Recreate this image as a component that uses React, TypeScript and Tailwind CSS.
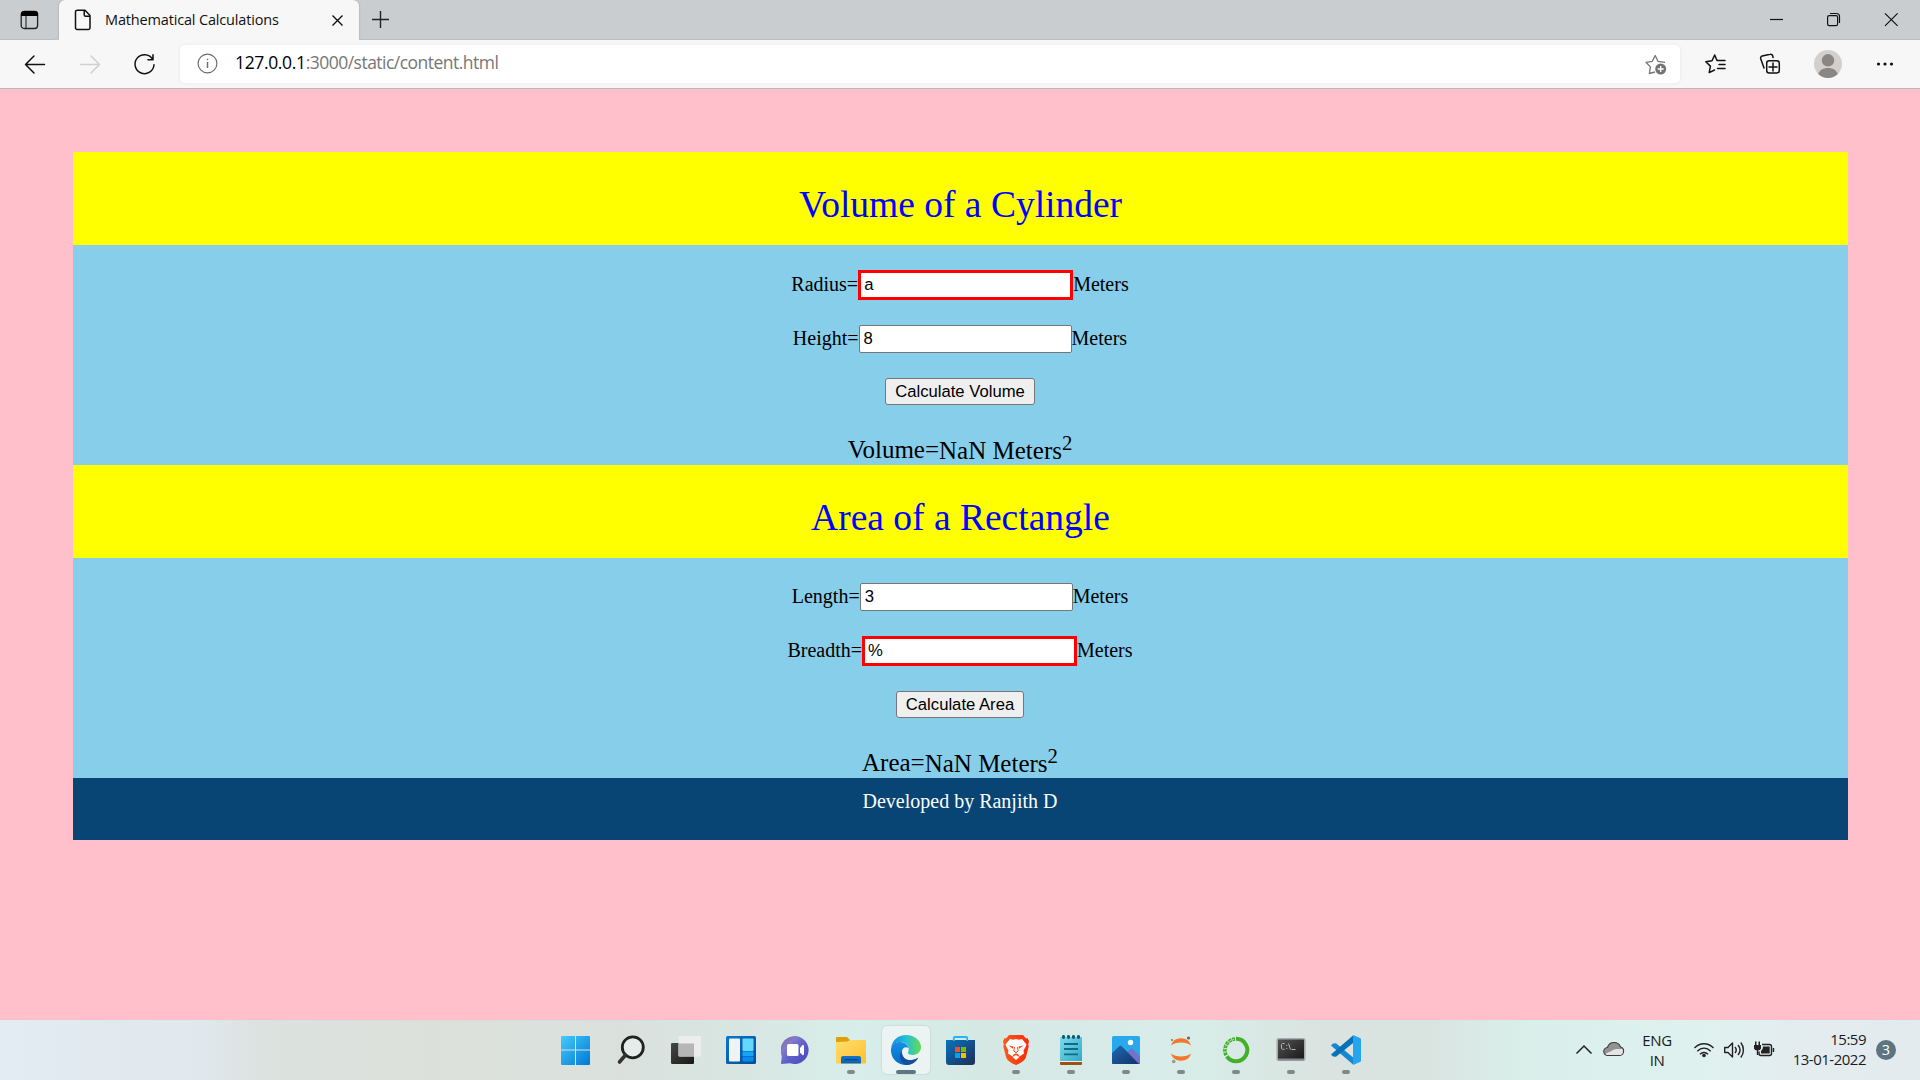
import React from 'react';

type P = { children?: React.ReactNode };

function Field({ label, value, invalid, top }: { label: string; value: string; invalid?: boolean; top: string }) {
  return (
    <div className={`flex items-center justify-center text-[20px] leading-[22px] ${top}`}>
      <span className="pb-[2px]">{label}</span>
      <input
        readOnly
        value={value}
        className={
          invalid
            ? 'h-[30px] w-[215px] border-[3px] border-[#ff0000] bg-white px-[3px] font-["Liberation_Sans",Arial,sans-serif] text-[16.667px] outline-none'
            : 'h-[28px] w-[213px] rounded-[2px] border border-[#767676] bg-white px-[4px] font-["Liberation_Sans",Arial,sans-serif] text-[16.667px] outline-none'
        }
      />
      <span className="pb-[2px]">Meters</span>
    </div>
  );
}

function CalcButton({ children, cls }: P & { cls: string }) {
  return (
    <button className={`block h-[27px] rounded-[3px] border border-[#767676] bg-[#efefef] text-center font-["Liberation_Sans",Arial,sans-serif] text-[16.667px] leading-[25px] whitespace-nowrap ${cls}`}>
      {children}
    </button>
  );
}

function Result({ label }: { label: string }) {
  return (
    <div className="mt-[27px] flex h-[33px] items-start justify-center text-[25px] leading-[28px]">
      <span className="pt-[4px]">{label}=</span>
      <span className="pt-[5px]">NaN Meters</span>
      <span className="text-[20.8px] leading-[22px]">2</span>
    </div>
  );
}

function Heading({ children }: P) {
  return <h1 className="h-[93px] bg-[#ffff00] pt-[32px] text-center text-[37.5px] leading-[42px] text-[#0000ff]">{children}</h1>;
}

function Slot({ children, state }: P & { state?: 'open' | 'active' }) {
  return (
    <div className="flex h-[60px] w-[55px] flex-col items-center pt-[6px]">
      <div className={`flex h-[48px] w-[48px] flex-col items-center rounded-[5px] ${state === 'active' ? 'bg-[#ecf4f3] shadow-[0_0_1px_1px_rgba(0,0,0,0.06)]' : ''}`}>
        <svg className="mt-[9px] block shrink-0" width="30" height="30" viewBox="0 0 30 30">{children}</svg>
        {state === 'open' && <div className="mt-[5px] h-[4px] w-[8px] rounded-full bg-[#7f8a88]" />}
        {state === 'active' && <div className="mt-[5px] h-[4px] w-[20px] rounded-full bg-[#5f7583]" />}
      </div>
    </div>
  );
}

function TabStrip() {
  return (
    <div className="flex h-[40px] items-end bg-[#cacdcf]">
      <div className="flex h-[40px] w-[59px] items-center rounded-br-[6px] border-b border-[#babdbe] pl-[20px]">
        <svg width="19" height="20" viewBox="0 0 19 20">
          <rect x="1.2" y="1.5" width="16.4" height="17" rx="3" fill="none" stroke="#222" strokeWidth="1.3" />
          <path d="M1 5V4a3 3 0 0 1 3-3h11a3 3 0 0 1 3 3v2H1z" fill="#000" />
          <path d="M6 6v12" stroke="#333" strokeWidth="1.2" />
        </svg>
      </div>
      <div className="flex h-[40px] w-[300px] items-center rounded-t-[6px] bg-[#f7f7f7] pl-[15px] shadow-[0_0_2px_rgba(0,0,0,0.25)]">
        <svg width="18" height="22" viewBox="0 0 18 22" fill="none" stroke="#111" strokeWidth="1.5" strokeLinejoin="round">
          <path d="M3.500 1.200H11L16 6.500V18.800a1.800 1.800 0 0 1-1.800 1.800H3.300a1.800 1.800 0 0 1-1.800-1.800V3a1.800 1.800 0 0 1 2-1.800z" />
          <path d="M10.200 1.500v4.200a1.500 1.500 0 0 0 1.500 1.500H16" />
        </svg>
        <span className="ml-[13px] w-[212px] whitespace-nowrap pb-px font-['Open_Sans','Noto_Sans',sans-serif] text-[14.500px] tracking-[-0.16px] text-[#111]">Mathematical Calculations</span>
        <svg className="ml-[14px] mt-px" width="13" height="13" viewBox="0 0 13 13" stroke="#111" strokeWidth="1.400"><path d="M1.500 1.500l10 10M11.500 1.500l-10 10" /></svg>
      </div>
      <div className="flex h-[40px] flex-1 items-center border-b border-[#babdbe]">
        <svg className="ml-[12px]" width="19" height="19" viewBox="0 0 19 19" stroke="#222" strokeWidth="1.400"><path d="M9.500 1v17M1 9.500h17" /></svg>
        <svg className="ml-auto" width="150" height="39" viewBox="1770 0 150 39" fill="none" stroke="#111" strokeWidth="1.200">
          <path d="M1770 19.500h13" />
          <rect x="1827.600" y="15.600" width="10" height="10" rx="1.600" />
          <path d="M1830 13.500h6.500a3 3 0 0 1 3 3V23" />
          <path d="M1885 13.300l12.600 12.600M1897.600 13.300L1885 25.900" />
        </svg>
      </div>
    </div>
  );
}

function Toolbar() {
  return (
    <div className="flex h-[49px] items-center border-b border-[#b5b9ba] bg-[#f7f7f7]">
      <svg className="shrink-0" width="180" height="48" viewBox="0 41 180 48" fill="none" stroke="#111" strokeWidth="1.500" strokeLinecap="round" strokeLinejoin="round">
        <path d="M44.500 65.500H25.500M34 57L25.500 65.500l8.500 8.500" />
        <path d="M80.500 65.500H99M91 57l8.500 8.500L91 74" stroke="#d0d0d0" />
        <path d="M152.500 60a9.500 9.500 0 1 0 1.500 5.800M153 55.800v5h-5" />
      </svg>
      <div className="mb-[2px] mt-px flex h-[38px] w-[1500px] items-center rounded-[5px] bg-white pl-[17px] shadow-[0_0_4px_rgba(0,0,0,0.07)]">
        <svg width="21" height="21" viewBox="0 0 21 21" fill="none" stroke="#6d6d6d" strokeWidth="1.200">
          <circle cx="10.500" cy="10.500" r="9.400" /><path d="M10.500 9v6" strokeWidth="1.500" /><circle cx="10.500" cy="6.500" r=".800" fill="#6d6d6d" stroke="none" />
        </svg>
        <span className="ml-[17px] whitespace-nowrap pb-[2px] font-['Open_Sans','Noto_Sans',sans-serif] text-[17.500px] tracking-[-0.520px] text-[#767676]"><span className="tracking-[-0.350px] text-black">127.0.0.1</span>:3000/static/content.html</span>
        <svg className="ml-auto mr-[13px]" width="22" height="22" viewBox="0 0 22 22">
          <path d="M10 19l-5.600 1.500 1-6.600L1 9.300l6.300-1L10.200 2.500 13 8.300l7 1" fill="none" stroke="#747474" strokeWidth="1.300" strokeLinejoin="round" />
          <circle cx="15.700" cy="16" r="5.500" fill="#747474" /><path d="M12.700 16h6M15.700 13v6" stroke="#fff" strokeWidth="1.300" />
        </svg>
      </div>
      <svg width="240" height="48" viewBox="1680 40 240 48" fill="none" stroke="#111" strokeWidth="1.500" strokeLinejoin="round" strokeLinecap="round">
        <path d="M1717 60.500l-2.300-5.500-2.700 5.700-6.200 1 4.600 4.400-1.200 6.500 5.300-2.600M1717.500 60.500h7.500M1719 64.500h6M1717.500 68.500h7.500" />
        <rect x="1766.700" y="60.700" width="12.600" height="12.400" rx="2.500" /><path d="M1773 63v8M1769 67h8" />
        <path d="M1764 68l-3.300-9.200a2.200 2.200 0 0 1 1.500-2.800l8-1.700a2 2 0 0 1 2.500 1.700l.400 1.500" />
        <circle cx="1828" cy="64" r="14" fill="#d2d0ce" stroke="none" />
        <circle cx="1828" cy="60.300" r="6.200" fill="#8a8683" stroke="none" />
        <path d="M1818.300 74c1.200-4 5-6 9.700-6s8.500 2 9.700 6a14 14 0 0 1-19.400 0z" fill="#8a8683" stroke="none" />
        <g fill="#111" stroke="none"><circle cx="1878.500" cy="64" r="1.600" /><circle cx="1885" cy="64" r="1.600" /><circle cx="1891.500" cy="64" r="1.600" /></g>
      </svg>
    </div>
  );
}

function Taskbar() {
  return (
    <div className="flex h-[60px] items-start bg-[linear-gradient(90deg,#e3ebf3_0px,#e1e9ee_190px,#dce2df_260px,#dce0db_430px,#dae1dd_620px,#d8e6e2_740px,#d8eeea_860px,#d5e8e4_980px,#d8ebe8_1120px,#d8ece8_1200px,#dae3df_1330px,#d9e4e1_1430px,#d9efea_1520px,#dff1ef_1700px,#e3ecef_1800px,#e3ebee_1920px)] font-['Open_Sans','Noto_Sans',sans-serif] text-[#1b1b1b]">
      <div className="ml-[548.5px] flex w-[825px] shrink-0">
        <Slot>
          <defs><linearGradient id="win" x1="0" y1="0" x2="1" y2="1"><stop stopColor="#45cbfb" /><stop offset="1" stopColor="#0078d4" /></linearGradient></defs>
          <path d="M1 1H14V14.500H0V2a1 1 0 0 1 1-1zM15 1h13a1 1 0 0 1 1 1V14.500H15zM0 15.500H14V30H1a1 1 0 0 1-1-1zM15 15.500H29V29a1 1 0 0 1-1 1H15z" fill="url(#win)" />
        </Slot>
        <Slot>
          <circle cx="16.800" cy="12.300" r="10.500" fill="#e6ecea" stroke="#222" strokeWidth="2.800" /><path d="M9.500 20l-6 7" stroke="#333" strokeWidth="3.600" strokeLinecap="round" />
        </Slot>
        <Slot>
          <defs><linearGradient id="tv" x1="0" y1="0" x2="1" y2="1"><stop stopColor="#474745" /><stop offset="1" stopColor="#181818" /></linearGradient></defs>
          <rect x="0" y="8" width="23" height="21" rx="1.200" fill="url(#tv)" /><rect x="7.500" y="1" width="22.500" height="20.500" rx="1.200" fill="#ededed" /><path d="M7.500 8.500H23v13H8.500a1 1 0 0 1-1-1z" fill="#b5b6b5" />
        </Slot>
        <Slot>
          <defs><linearGradient id="wd" x1="0" y1="0" x2="1" y2="1"><stop stopColor="#0878d2" /><stop offset="1" stopColor="#064b91" /></linearGradient></defs>
          <rect x="0" y="1" width="30" height="28" rx="1.500" fill="url(#wd)" /><rect x="3" y="3.500" width="11" height="23" rx="1" fill="#f0f2f4" /><rect x="16.500" y="3.500" width="11" height="12.500" rx="1" fill="#66d8ff" /><rect x="16.500" y="16.500" width="11" height="4.500" fill="#16a5f5" /><rect x="16.500" y="21.500" width="11" height="5" rx="1" fill="#058cec" />
        </Slot>
        <Slot>
          <defs><linearGradient id="ch" x1="0" y1="0" x2="1" y2="1"><stop stopColor="#8363a5" /><stop offset=".3" stopColor="#837bcb" /><stop offset=".55" stopColor="#5e60c9" /><stop offset="1" stopColor="#4a43bb" /></linearGradient></defs>
          <g transform="translate(-1 0)"><path d="M15.500 1a14 14 0 1 1-5.500 27.200L1 29l.800-8A14.300 14.300 0 0 1 15.500 1z" fill="url(#ch)" /><rect x="7" y="9" width="11.500" height="12" rx="1.500" fill="#fff" /><path d="M20 13l2.500-3q1.500-.500 1.500 1v8q0 1.500-1.500 1L20 17.500z" fill="#fff" /></g>
        </Slot>
        <Slot state="open">
          <defs><linearGradient id="fe" x1="0" y1="0" x2="1" y2="1"><stop stopColor="#ffdd70" /><stop offset="1" stopColor="#ffc02f" /></linearGradient><linearGradient id="fe2" x1="0" y1="0" x2="0" y2="1"><stop stopColor="#1474cc" /><stop offset="1" stopColor="#0b63ae" /></linearGradient></defs>
          <path d="M1 2h10l3 3h15a1 1 0 0 1 1 1v5H0V3a1 1 0 0 1 1-1z" fill="#dea002" /><path d="M11.500 6.500L14 5h16v22.500a1 1 0 0 1-1 1H1a1 1 0 0 1-1-1V7z" fill="url(#fe)" /><path d="M5 28.500V23a2 2 0 0 1 2-2h16a2 2 0 0 1 2 2v5.500z" fill="url(#fe2)" /><path d="M8.500 24.700h13" stroke="#063f7c" />
        </Slot>
        <Slot state="active">
          <defs><linearGradient id="e1" x1="0" y1=".5" x2="1" y2=".5"><stop stopColor="#168be1" /><stop offset=".5" stopColor="#26bfd8" /><stop offset="1" stopColor="#66dc50" /></linearGradient><linearGradient id="e2" x1="0" y1="0" x2="0" y2="1"><stop stopColor="#1491e4" /><stop offset="1" stopColor="#0869c3" /></linearGradient></defs>
          <path d="M0 14C1 5 7 0 15 0c9 0 15 6 15 12 0 5-4 8-8 8-3 0-5.500-1-5-2.500C20 11 14 6.500 8 7 4 7.500 1 10 0 14z" fill="url(#e1)" /><path d="M0 14C1 9 5 6.500 9.500 7c4 .4 7.500 3 8 6-3-2-6 0-6.500 3-.7 6 4 10 10 9 2.500-.3 5-1.500 6-2-2.500 4.500-7 7-12 7C6.500 30-.7 23 0 14z" fill="url(#e2)" /><path d="M11 16c-.7 6 4 10 10 9 2.500-.3 5-1.500 6.500-2.500C25 27 21 30 15 30 9 28 7 20 11 16z" fill="#1550a0" />
        </Slot>
        <Slot>
          <defs><linearGradient id="ms" x1="0" y1="0" x2="1" y2="1"><stop stopColor="#0873bd" /><stop offset="1" stopColor="#1d2d59" /></linearGradient></defs>
          <g transform="translate(-1 0)"><path d="M1 5h29v22a3 3 0 0 1-3 3H4a3 3 0 0 1-3-3z" fill="url(#ms)" /><path d="M8.800 6V3A1 1 0 0 1 9.800 2h11.400a1 1 0 0 1 1 1v3" fill="none" stroke="#23b6f4" strokeWidth="1.800" /><path d="M10 12h5v5h-5z" fill="#f25022" /><path d="M16 12h5v5h-5z" fill="#7fba00" /><path d="M10 18h5v5h-5z" fill="#00a4ef" /><path d="M16 18h5v5h-5z" fill="#ffb900" /></g>
        </Slot>
        <Slot state="open">
          <defs><linearGradient id="br" x1="0" y1="0" x2="1" y2="0"><stop stopColor="#fb5a1e" /><stop offset="1" stopColor="#fb2a06" /></linearGradient></defs>
          <path d="M8 0h14l3 3.500 1.500-.5L28 6.500l-.8 3 .5 2L25 22c-1 3.500-5 6-10 8-5-2-9-4.500-10-8L2.300 11.500l.5-2-.8-3L3.500 3l1.500.5z" fill="url(#br)" />
          <path d="M9 4l3 .8 3-.8 3 .8 3-.8 4.500 5.500-1 2.500-2 3.500.5 3-4.500 3L17 19h-4l-1.500 2.500-4.500-3 .5-3-2-3.500-1-2.500z" fill="#fff" />
          <path d="M7.500 10.500l5 1-.5 2.300zM22.500 10.500l-5 1 .5 2.300z" fill="#fb451a" />
          <path d="M13.500 12l-.7 4 2.200 1.500 2.200-1.500-.7-4M15 17.500V20" fill="none" stroke="#fb451a" strokeWidth="1" />
          <path d="M11.500 22l3.500-2 3.500 2-3.500 3z" fill="#fff" />
        </Slot>
        <Slot state="open">
          <defs><linearGradient id="np" x1="0" y1="0" x2="1" y2="1"><stop stopColor="#7ddcec" /><stop offset="1" stopColor="#30a9c7" /></linearGradient></defs>
          <rect x="4" y="25" width="22" height="5" rx="1" fill="#9a5314" /><path d="M4 25h22v2H4z" fill="#f5f2ec" /><path d="M5 2h20a1 1 0 0 1 1 1v23H4V3a1 1 0 0 1 1-1z" fill="url(#np)" /><path d="M8 9h14M8 14h14M8 19.300h14" stroke="#116b83" strokeWidth="1.800" /><g fill="#14566b"><ellipse cx="7.500" cy="2" rx="1.600" ry="2.100" /><ellipse cx="12.500" cy="2" rx="1.600" ry="2.100" /><ellipse cx="17.500" cy="2" rx="1.600" ry="2.100" /><ellipse cx="22.500" cy="2" rx="1.600" ry="2.100" /></g>
        </Slot>
        <Slot state="open">
          <defs><linearGradient id="ph" x1="0" y1="0" x2="1" y2="1"><stop stopColor="#2067b4" /><stop offset="1" stopColor="#103469" /></linearGradient></defs>
          <rect x="1" y="1" width="28" height="28" rx="1.500" fill="#27a9eb" /><path d="M15 18l4.500-4q1-.800 2 0L29 21v8H15z" fill="#7471ca" /><path d="M1 18l7.500-7q1-.800 2 0L28 29H2a1 1 0 0 1-1-1z" fill="url(#ph)" /><circle cx="19.500" cy="7.500" r="2.700" fill="#fff" />
        </Slot>
        <Slot state="open">
          <path d="M4.800 10.500a10.800 10.800 0 0 1 20.400 0C20.500 6.500 9.500 6.500 4.800 10.500zM4.800 18.500a10.800 10.800 0 0 0 20.400 0C20.500 22.500 9.500 22.500 4.800 18.500z" fill="#f37726" /><circle cx="22.500" cy="3" r="1.600" fill="#666" /><circle cx="6" cy="5" r="1.100" fill="#777" /><circle cx="7.700" cy="26.500" r="1.800" fill="#929b9a" />
        </Slot>
        <Slot state="open">
          <path d="M15 3.800a11.200 11.200 0 1 1-9.200 17.500" fill="none" stroke="#43b02a" strokeWidth="4" /><path d="M14 4a11.300 11.300 0 0 0-8.800 16.500" fill="none" stroke="#43b02a" strokeWidth="3.600" strokeDasharray="3 .7" /><path d="M13 4.300a11.300 11.300 0 0 0-8.500 15" fill="none" stroke="#d9e9e4" strokeWidth="1" strokeDasharray="1.500 1.800" />
        </Slot>
        <Slot state="open">
          <defs><linearGradient id="cm" x1="0" y1="0" x2="1" y2="1"><stop stopColor="#555" /><stop offset=".5" stopColor="#353535" /><stop offset="1" stopColor="#171717" /></linearGradient></defs>
          <rect x="1.200" y="3.700" width="27.600" height="21.500" rx="1.500" fill="url(#cm)" stroke="#a7abb0" strokeWidth="1.600" /><path d="M2 24.500h26" stroke="#85898d" strokeWidth="2" /><path d="M8.500 8.500h-2l-1 1v4l1 .8h2M10.800 10v1M10.800 13v1M12.500 8.500l2 6M15.500 14.500h4" stroke="#b5b5b5" strokeWidth="1" fill="none" />
        </Slot>
        <Slot state="open">
          <path d="M0 10.500l2-2 3-.200L24 24l-2 5.500z" fill="#1687d0" /><path d="M0 19.500l2 2 3 .2L24 6.500 22 .5z" fill="#0872b9" /><path d="M22 0l7 3a1.500 1.500 0 0 1 1 1.400v21.200a1.500 1.500 0 0 1-1 1.400l-7 3z" fill="#25a4f0" />
        </Slot>
      </div>
      <svg className="ml-[198.5px] shrink-0" width="56" height="60" viewBox="1572 1020 56 60">
        <path d="M1576.500 1053.500l7.500-7.500 7.500 7.500" fill="none" stroke="#222" strokeWidth="1.500" />
        <path d="M1608 1055.500a4 4 0 0 1-.5-8c1-3.500 4-5 6.500-5s5.500 1.500 6.500 4.500c4 .5 4.500 7.500-.5 8.500z" fill="#929292" stroke="#3b3b3b" strokeWidth="1.100" /><path d="M1606 1054.500c0-2 3-2 4.500-3 2-1.500 4-2.500 6-2.500h5.500c2 2 1 5-1.500 6H1607z" fill="#e4e4e4" />
      </svg>
      <div className="mt-[10px] w-[58px] text-center text-[15px] leading-[20px] tracking-[-0.4px]">ENG<br />IN</div>
      <svg className="ml-[6px] shrink-0" width="84" height="60" viewBox="1692 1020 84 60" fill="none" stroke="#222" strokeWidth="1.400">
        <path d="M1694.500 1048c5.500-5.700 13.500-5.700 19 0M1697.300 1051.300c4-4.200 9.400-4.200 13.400 0M1700 1054.300c2.400-2.500 5.600-2.500 8 0" /><circle cx="1704" cy="1055.500" r="1.800" fill="#222" stroke="none" />
        <path d="M1724.700 1047.500h3.300l4.500-4.500v14l-4.500-4.500h-3.300z" strokeLinejoin="round" /><path d="M1735 1047c1.500 1.800 1.500 4.200 0 6M1738 1045c2.500 3 2.500 7 0 10M1740.800 1042.500c3.500 4.500 3.500 10.500 0 15" />
        <path d="M1762 1044.500h7.500q2 0 2 2v7q0 2-2 2H1761q-2 0-2-2v-2M1773.500 1048v4" /><path d="M1763 1046.500h6.700v7H1761v-2.500q2-1 2-4.500z" fill="#222" stroke="none" /><path d="M1754 1045h7v3.500q-.500 2-3.500 2t-3.500-2zM1755 1041.500h1.500v4H1755zM1758.500 1041.500h1.500v4h-1.500z" fill="#222" stroke="none" /><path d="M1757.500 1050v5" />
      </svg>
      <div className="mt-[9px] w-[90px] whitespace-nowrap text-right text-[15px] leading-[20px] tracking-[-0.5px]">15:59<br />13-01-2022</div>
      <div className="ml-[10px] mt-[20px] h-[20px] w-[20px] rounded-full bg-[#5e7481] text-center text-[14.5px] leading-[20px] text-white">3</div>
    </div>
  );
}

export default function App() {
  return (
    <div className="flex h-[1080px] w-[1920px] flex-col overflow-hidden bg-[#ffc0cb]">
      <TabStrip />
      <Toolbar />
      <main className="h-[931px] pl-[73px] pt-[63px] font-['Liberation_Serif','Times_New_Roman',serif] text-black">
        <div className="w-[1775px]">
          <Heading>Volume of a Cylinder</Heading>
          <section className="flex h-[220px] flex-col items-center bg-[#87ceeb] pr-[1px]">
            <Field label="Radius=" value="a" invalid top="mt-[25px]" />
            <Field label="Height=" value="8" top="mt-[25px]" />
            <CalcButton cls="mt-[25px] w-[150px]">Calculate Volume</CalcButton>
            <Result label="Volume" />
          </section>
          <Heading>Area of a Rectangle</Heading>
          <section className="flex h-[220px] flex-col items-center bg-[#87ceeb] pr-[1px]">
            <Field label="Length=" value="3" top="mt-[25px]" />
            <Field label="Breadth=" value="%" invalid top="mt-[25px]" />
            <CalcButton cls="mt-[25px] w-[128px]">Calculate Area</CalcButton>
            <Result label="Area" />
          </section>
          <footer className="h-[62px] bg-[#084575] pr-[1px] pt-[12px] text-center text-[20px] leading-[22px] text-white">Developed by Ranjith D</footer>
        </div>
      </main>
      <Taskbar />
    </div>
  );
}
